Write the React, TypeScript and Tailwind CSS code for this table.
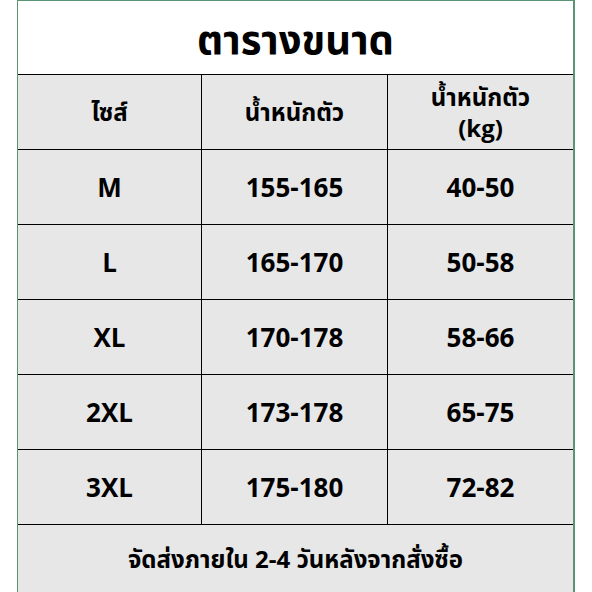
import React from "react";

const rows = [
  ["M", "155-165", "40-50"],
  ["L", "165-170", "50-58"],
  ["XL", "170-178", "58-66"],
  ["2XL", "173-178", "65-75"],
  ["3XL", "175-180", "72-82"],
];

export default function App() {
  return (
    <div
      className="w-[592px] h-[592px] bg-white overflow-hidden"
      style={{ fontFamily: '"Open Sans", "Noto Sans", "Noto Sans Thai", sans-serif' }}
    >
      <div className="ml-[17px] w-[558px] h-[592px] border-l border-t border-r-2 border-[#5a9473] flex flex-col text-black font-bold">
        <div className="h-[73px] flex items-center justify-center text-[40px] leading-none bg-white pt-[3px]">
          ตารางขนาด
        </div>
        <div className="h-[75px] flex border-t border-black bg-[#e7e7e7]">
          <div className="w-[184px] border-r border-black flex items-center justify-center text-[24px]">ไซส์</div>
          <div className="w-[186px] border-r border-black flex items-center justify-center text-[24px]">น้ำหนักตัว</div>
          <div className="flex-1 flex flex-col items-center justify-center text-[24px] leading-[31px]">
            <span>น้ำหนักตัว</span>
            <span>(kg)</span>
          </div>
        </div>
        {rows.map((r) => (
          <div key={r[0]} className="h-[75px] flex border-t border-black bg-[#e7e7e7] text-[26px]">
            <div className="w-[184px] border-r border-black flex items-center justify-center">{r[0]}</div>
            <div className="w-[186px] border-r border-black flex items-center justify-center">{r[1]}</div>
            <div className="flex-1 flex items-center justify-center">{r[2]}</div>
          </div>
        ))}
        <div className="flex-1 border-t border-black bg-[#e7e7e7] flex items-center justify-center text-[24px]">
          จัดส่งภายใน 2-4 วันหลังจากสั่งซื้อ
        </div>
      </div>
    </div>
  );
}
